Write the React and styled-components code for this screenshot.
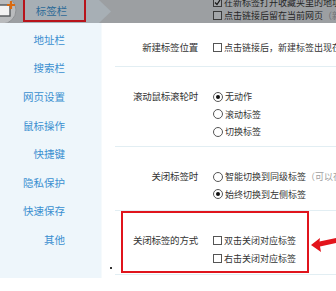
import React from 'react';
import styled, { createGlobalStyle } from 'styled-components';

const GlobalStyle = createGlobalStyle`
  html, body {
    margin: 0;
    padding: 0;
    background: #ffffff;
  }
  body {
    width: 336px;
    height: 291px;
    overflow: hidden;
    font-family: "Noto Sans CJK SC", "Noto Sans", sans-serif;
  }
`;

const Page = styled.div`
  width: 336px;
  height: 291px;
  display: flex;
  flex-direction: column;
  background: #ffffff;
  position: relative;
  overflow: hidden;
`;

const TopBar = styled.div`
  height: 23px;
  flex: none;
  display: flex;
  background: #9c9fa2;
  overflow: hidden;
`;

const Logo = styled.div`
  width: 23px;
  height: 23px;
  flex: none;
`;

const Tab = styled.div`
  width: 88px;
  height: 23px;
  flex: none;
  position: relative;
  background: #a7afb5;
  clip-path: polygon(0 0, 76px 0, 88px 11.5px, 76px 23px, 0 23px);
`;

const TabLabel = styled.div`
  width: 63px;
  height: 22px;
  box-sizing: border-box;
  border: 2px solid #b8141b;
  border-top: none;
  display: flex;
  align-items: center;
  justify-content: center;
  padding-right: 6px;
  font-size: 10.5px;
  color: #2c6a97;
`;

const TopOptions = styled.div`
  margin-left: 102px;
  margin-top: -4px;
  display: flex;
  flex-direction: column;
  white-space: nowrap;
`;

const Body = styled.div`
  display: flex;
  height: 255px;
  flex: none;
`;

const Sidebar = styled.div`
  width: 102px;
  flex: none;
  background: #eef6fb;
  padding-top: 2px;
  box-sizing: border-box;
  border-right: 1px solid #f6fafc;
`;

const NavItem = styled.div`
  height: 28.6px;
  display: flex;
  align-items: center;
  justify-content: flex-end;
  padding-right: 36px;
  font-size: 10.5px;
  color: #3a8fd0;
`;

const Content = styled.div`
  flex: 1;
  min-width: 0;
  display: flex;
  flex-direction: column;
`;

const Row = styled.div`
  height: ${p => p.h}px;
  box-sizing: border-box;
  margin-left: 13px;
  padding-top: ${p => p.top}px;
  border-bottom: 1px solid #e2eef3;
  display: flex;
  align-items: flex-start;
  position: relative;
`;

const Label = styled.div`
  width: 83px;
  flex: none;
  text-align: right;
  font-size: 9.5px;
  line-height: 17px;
  color: #333333;
  letter-spacing: -0.2px;
`;

const Options = styled.div`
  margin-left: 15px;
  display: flex;
  flex-direction: column;
  min-width: 0;
  white-space: nowrap;
  overflow: hidden;
`;

const Option = styled.div`
  height: ${p => p.h || 17.5}px;
  display: flex;
  align-items: center;
  font-size: 9px;
  color: ${p => p.dim ? '#262626' : '#333333'};
`;

const Box = styled.span`
  width: 9px;
  height: 9px;
  flex: none;
  box-sizing: border-box;
  border: 1px solid ${p => p.dim ? '#3a3a3a' : '#555555'};
  background: ${p => p.dim ? '#a3a6a9' : '#ffffff'};
  margin-right: 2px;
  display: flex;
  align-items: center;
  justify-content: center;
`;

const Radio = styled.span`
  width: 10px;
  height: 10px;
  flex: none;
  box-sizing: border-box;
  border: 1px solid #555555;
  border-radius: 50%;
  background: #ffffff;
  margin-right: 2px;
  display: flex;
  align-items: center;
  justify-content: center;
  &::after {
    content: '';
    display: ${p => p.checked ? 'block' : 'none'};
    width: 4px;
    height: 4px;
    border-radius: 50%;
    background: #111111;
  }
`;

const Hint = styled.span`
  color: ${p => p.dim ? '#6e7073' : '#a0a0a0'};
`;

const Highlight = styled.div`
  position: absolute;
  left: 6px;
  top: 0;
  width: 188px;
  height: 62px;
  box-sizing: border-box;
  border: 2px solid #e0141c;
  pointer-events: none;
`;

const Arrow = styled.svg`
  position: absolute;
  left: 306px;
  top: 232px;
`;

const Dot = styled.span`
  position: absolute;
  left: 110px;
  top: 267px;
  width: 2px;
  height: 2px;
  background: #333333;
`;

function Check() {
  return (
    <svg width="7" height="7" viewBox="0 0 7 7">
      <path d="M1 3.5 L3 5.5 L6 1" stroke="#1a1a1a" strokeWidth="1.3" fill="none" />
    </svg>
  );
}

const navItems = ['地址栏', '搜索栏', '网页设置', '鼠标操作', '快捷键', '隐私保护', '快速保存', '其他'];

export default function App() {
  return (
    <Page>
      <GlobalStyle />
      <TopBar>
        <Logo>
          <svg width="23" height="23" viewBox="0 0 23 23">
            <circle cx="2" cy="10" r="14" fill="#b9bbbd" stroke="#8e9194" strokeWidth="1" />
            <rect x="-2" y="5" width="12" height="11" fill="#f2f2f2" stroke="#55585b" strokeWidth="1.4" />
            <path d="M11 1 V9 M7 5 H15" stroke="#d9690f" strokeWidth="2.2" />
          </svg>
        </Logo>
        <Tab>
          <TabLabel>标签栏</TabLabel>
        </Tab>
        <TopOptions>
          <Option h={13} dim>
            <Box dim><Check /></Box>在新标签打开收藏夹里的地址
          </Option>
          <Option h={13} dim>
            <Box dim />点击链接后留在当前网页<Hint dim>（新</Hint>
          </Option>
        </TopOptions>
      </TopBar>
      <Body>
        <Sidebar>
          {navItems.map(item => (
            <NavItem key={item}>{item}</NavItem>
          ))}
        </Sidebar>
        <Content>
          <Row h={44} top={16}>
            <Label>新建标签位置</Label>
            <Options>
              <Option>
                <Box />点击链接后，新建标签出现在当前标签右侧
              </Option>
            </Options>
          </Row>
          <Row h={80} top={21}>
            <Label>滚动鼠标滚轮时</Label>
            <Options>
              <Option><Radio checked />无动作</Option>
              <Option><Radio />滚动标签</Option>
              <Option><Radio />切换标签</Option>
            </Options>
          </Row>
          <Row h={64} top={21}>
            <Label>关闭标签时</Label>
            <Options>
              <Option><Radio />智能切换到同级标签<Hint>（可以在设置中修改）</Hint></Option>
              <Option><Radio checked />始终切换到左侧标签</Option>
            </Options>
          </Row>
          <Row h={64} top={21}>
            <Highlight />
            <Label>关闭标签的方式</Label>
            <Options>
              <Option><Box />双击关闭对应标签</Option>
              <Option><Box />右击关闭对应标签</Option>
            </Options>
          </Row>
        </Content>
      </Body>
      <Dot />
      <Arrow width="30" height="22" viewBox="0 0 30 22">
        <polygon points="5,13 14,6 13.5,9.5 30,6 30,11 14,14.5 15,20" fill="#e3141c" />
      </Arrow>
    </Page>
  );
}
